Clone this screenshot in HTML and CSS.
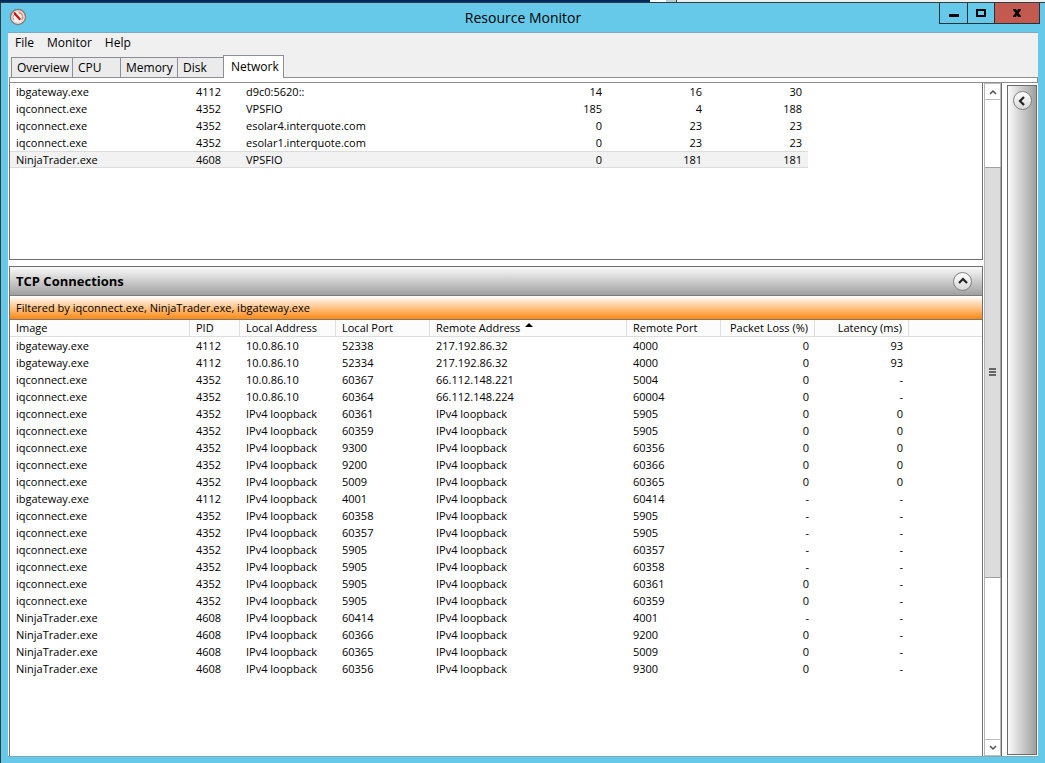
FILE: index.html
```html
<!DOCTYPE html>
<html lang="en">
<head>
    <meta charset="UTF-8">
    <meta name="viewport" content="width=device-width, initial-scale=1.0">
    <title>Resource Monitor</title>
    <link rel="stylesheet" href="styles.css">
</head>
<body>
    <div class="desktop">
        <div class="desktop-dark"></div>
        <div class="desktop-scroll"></div>
        <div class="desktop-light"></div>
    </div>
    <div class="window">
        <header class="titlebar">
            <svg class="app-icon" width="18" height="18" viewBox="0 0 18 18">
                <circle cx="9" cy="9" r="7.5" fill="#f7f4f2" stroke="#857a75" stroke-width="1.4"/>
                <circle cx="9" cy="9" r="6" fill="none" stroke="#ddd3ce" stroke-width="1"/>
                <path d="M9.500 4.500a4.500 4.500 0 0 1 3 7.500" fill="none" stroke="#e08a66" stroke-width="1.400"/>
                <path d="M5 12a5 5 0 0 1-.5-5" fill="none" stroke="#a8a09c" stroke-width="1"/>
                <path d="M4.500 4.500L6 4l6 7-1.500 1.500L5 6.500z" fill="#d3120f"/>
            </svg>
            <h1 class="title">Resource Monitor</h1>
            <div class="window-buttons">
                <button class="win-btn" aria-label="Minimize"><svg width="10" height="10" viewBox="0 0 10 10"><path d="M0 6h10v3H0z"/></svg></button>
                <button class="win-btn" aria-label="Maximize"><svg width="10" height="10" viewBox="0 0 10 10"><path d="M0 1h10v8H0zM2 3v4h6V3z" fill-rule="evenodd"/></svg></button>
                <button class="win-btn close" aria-label="Close"><svg width="10" height="10" viewBox="0 0 10 10"><path d="M1 1h3l1 2 1-2h3v1L6.500 5 9 8v1H6L5 7 4 9H1V8l2.500-3L1 2z"/></svg></button>
            </div>
        </header>
        <div class="content">
            <nav class="menu">
                <button>File</button>
                <button>Monitor</button>
                <button>Help</button>
            </nav>
            <div class="tabs" role="tablist">
                <button class="tab overview" role="tab">Overview</button>
                <button class="tab cpu" role="tab">CPU</button>
                <button class="tab memory" role="tab">Memory</button>
                <button class="tab disk" role="tab">Disk</button>
                <button class="tab network active" role="tab" aria-selected="true">Network</button>
            </div>
            <div class="tab-edge"></div>
            <main class="page">
                <div class="panels">
                    <section class="panel activity">
                        <table class="activity-table">
                            <colgroup>
                                <col class="w-image"><col class="w-pid"><col class="w-host"><col class="w-rate"><col class="w-rate"><col class="w-rate">
                            </colgroup>
                            <tbody>
                                <tr><td>ibgateway.exe</td><td>4112</td><td>d9c0:5620::</td><td class="num">14</td><td class="num">16</td><td class="num">30</td></tr>
                                <tr><td>iqconnect.exe</td><td>4352</td><td>VPSFIO</td><td class="num">185</td><td class="num">4</td><td class="num">188</td></tr>
                                <tr><td>iqconnect.exe</td><td>4352</td><td>esolar4.interquote.com</td><td class="num">0</td><td class="num">23</td><td class="num">23</td></tr>
                                <tr><td>iqconnect.exe</td><td>4352</td><td>esolar1.interquote.com</td><td class="num">0</td><td class="num">23</td><td class="num">23</td></tr>
                                <tr class="selected"><td>NinjaTrader.exe</td><td>4608</td><td>VPSFIO</td><td class="num">0</td><td class="num">181</td><td class="num">181</td></tr>
                            </tbody>
                        </table>
                    </section>
                    <section class="panel tcp">
                        <div class="panel-head">
                            <h2>TCP Connections</h2>
                            <button class="round-btn" aria-label="Collapse"><svg width="10" height="10" viewBox="0 0 10 10"><path d="M1 7l4-4 4 4" fill="none" stroke="#222" stroke-width="2.200"/></svg></button>
                        </div>
                        <div class="filter">Filtered by iqconnect.exe, NinjaTrader.exe, ibgateway.exe</div>
                        <table class="tcp-table">
                            <colgroup>
                                <col class="w-image"><col class="w-pid"><col class="w-address"><col class="w-port"><col class="w-remote"><col class="w-port"><col class="w-port"><col class="w-port"><col>
                            </colgroup>
                            <thead>
                                <tr><th>Image</th><th>PID</th><th>Local Address</th><th>Local Port</th><th class="sorted">Remote Address</th><th>Remote Port</th><th class="num">Packet Loss (%)</th><th class="num">Latency (ms)</th><th></th></tr>
                            </thead>
                            <tbody>
                                <tr><td>ibgateway.exe</td><td>4112</td><td>10.0.86.10</td><td>52338</td><td>217.192.86.32</td><td>4000</td><td class="num">0</td><td class="num">93</td><td></td></tr>
                                <tr><td>ibgateway.exe</td><td>4112</td><td>10.0.86.10</td><td>52334</td><td>217.192.86.32</td><td>4000</td><td class="num">0</td><td class="num">93</td><td></td></tr>
                                <tr><td>iqconnect.exe</td><td>4352</td><td>10.0.86.10</td><td>60367</td><td>66.112.148.221</td><td>5004</td><td class="num">0</td><td class="num">-</td><td></td></tr>
                                <tr><td>iqconnect.exe</td><td>4352</td><td>10.0.86.10</td><td>60364</td><td>66.112.148.224</td><td>60004</td><td class="num">0</td><td class="num">-</td><td></td></tr>
                                <tr><td>iqconnect.exe</td><td>4352</td><td>IPv4 loopback</td><td>60361</td><td>IPv4 loopback</td><td>5905</td><td class="num">0</td><td class="num">0</td><td></td></tr>
                                <tr><td>iqconnect.exe</td><td>4352</td><td>IPv4 loopback</td><td>60359</td><td>IPv4 loopback</td><td>5905</td><td class="num">0</td><td class="num">0</td><td></td></tr>
                                <tr><td>iqconnect.exe</td><td>4352</td><td>IPv4 loopback</td><td>9300</td><td>IPv4 loopback</td><td>60356</td><td class="num">0</td><td class="num">0</td><td></td></tr>
                                <tr><td>iqconnect.exe</td><td>4352</td><td>IPv4 loopback</td><td>9200</td><td>IPv4 loopback</td><td>60366</td><td class="num">0</td><td class="num">0</td><td></td></tr>
                                <tr><td>iqconnect.exe</td><td>4352</td><td>IPv4 loopback</td><td>5009</td><td>IPv4 loopback</td><td>60365</td><td class="num">0</td><td class="num">0</td><td></td></tr>
                                <tr><td>ibgateway.exe</td><td>4112</td><td>IPv4 loopback</td><td>4001</td><td>IPv4 loopback</td><td>60414</td><td class="num">-</td><td class="num">-</td><td></td></tr>
                                <tr><td>iqconnect.exe</td><td>4352</td><td>IPv4 loopback</td><td>60358</td><td>IPv4 loopback</td><td>5905</td><td class="num">-</td><td class="num">-</td><td></td></tr>
                                <tr><td>iqconnect.exe</td><td>4352</td><td>IPv4 loopback</td><td>60357</td><td>IPv4 loopback</td><td>5905</td><td class="num">-</td><td class="num">-</td><td></td></tr>
                                <tr><td>iqconnect.exe</td><td>4352</td><td>IPv4 loopback</td><td>5905</td><td>IPv4 loopback</td><td>60357</td><td class="num">-</td><td class="num">-</td><td></td></tr>
                                <tr><td>iqconnect.exe</td><td>4352</td><td>IPv4 loopback</td><td>5905</td><td>IPv4 loopback</td><td>60358</td><td class="num">-</td><td class="num">-</td><td></td></tr>
                                <tr><td>iqconnect.exe</td><td>4352</td><td>IPv4 loopback</td><td>5905</td><td>IPv4 loopback</td><td>60361</td><td class="num">0</td><td class="num">-</td><td></td></tr>
                                <tr><td>iqconnect.exe</td><td>4352</td><td>IPv4 loopback</td><td>5905</td><td>IPv4 loopback</td><td>60359</td><td class="num">0</td><td class="num">-</td><td></td></tr>
                                <tr><td>NinjaTrader.exe</td><td>4608</td><td>IPv4 loopback</td><td>60414</td><td>IPv4 loopback</td><td>4001</td><td class="num">-</td><td class="num">-</td><td></td></tr>
                                <tr><td>NinjaTrader.exe</td><td>4608</td><td>IPv4 loopback</td><td>60366</td><td>IPv4 loopback</td><td>9200</td><td class="num">0</td><td class="num">-</td><td></td></tr>
                                <tr><td>NinjaTrader.exe</td><td>4608</td><td>IPv4 loopback</td><td>60365</td><td>IPv4 loopback</td><td>5009</td><td class="num">0</td><td class="num">-</td><td></td></tr>
                                <tr><td>NinjaTrader.exe</td><td>4608</td><td>IPv4 loopback</td><td>60356</td><td>IPv4 loopback</td><td>9300</td><td class="num">0</td><td class="num">-</td><td></td></tr>
                            </tbody>
                        </table>
                    </section>
                </div>
                <div class="scrollbar">
                    <button class="scroll-btn up" aria-label="Scroll up"><svg width="8" height="6" viewBox="0 0 8 6"><path d="M1 5l3-3 3 3" fill="none" stroke="#505050" stroke-width="1.500"/></svg></button>
                    <div class="track-above"></div>
                    <div class="thumb"><svg width="7" height="8" viewBox="0 0 7 8"><path d="M0 0h7v2H0zM0 3h7v2H0zM0 6h7v2H0z" fill="#666"/></svg></div>
                    <div class="track-below"></div>
                    <button class="scroll-btn down" aria-label="Scroll down"><svg width="8" height="6" viewBox="0 0 8 6"><path d="M1 1l3 3 3-3" fill="none" stroke="#505050" stroke-width="1.500"/></svg></button>
                </div>
                <aside class="side">
                    <button class="round-btn" aria-label="Show graphs"><svg width="10" height="10" viewBox="0 0 10 10"><path d="M7 1L3 5l4 4" fill="none" stroke="#222" stroke-width="2.200"/></svg></button>
                </aside>
            </main>
        </div>
    </div>
</body>
</html>
```
FILE: styles.css
```css
* {
    box-sizing: border-box;
}
body {
    margin: 0;
    height: 100vh;
    display: flex;
    flex-direction: column;
    overflow: hidden;
    font-family: "Open Sans", "Noto Sans", sans-serif;
    font-size: 11px;
    color: #000;
}
button {
    font: inherit;
    color: inherit;
    margin: 0;
    padding: 0;
    border: 0;
    background: none;
}
svg {
    display: block;
}
/* strip of the windows behind */
.desktop {
    display: flex;
    height: 2px;
}
.desktop-dark {
    flex: 651;
    background: #04265a;
}
.desktop-scroll {
    flex: 26;
    background: linear-gradient(to right, #fff 60%, #b9cdd2 60%);
    border-right: 1px solid #444;
}
.desktop-light {
    flex: 368;
    background: #eee;
}
.window {
    flex: 1;
    min-height: 0;
    display: flex;
    flex-direction: column;
    background: #66c9e9;
    border-top: 1px solid #2e3c44;
    border-left: 1px solid #2e3c44;
    padding: 0 7px 6px;
}
.titlebar {
    display: grid;
    grid-template-columns: 1fr auto 1fr;
    align-items: start;
    height: 29px;
}
.app-icon {
    margin: 5px 0 0 1px;
}
.title {
    margin: 0;
    font-size: 14px;
    font-weight: 400;
    line-height: 29px;
}
.window-buttons {
    display: flex;
    justify-self: end;
    margin-right: -2px;
    border: 1px solid #24323a;
    border-top: 0;
}
.win-btn {
    display: flex;
    align-items: center;
    justify-content: center;
    width: 27px;
    height: 20px;
    border-left: 1px solid #24323a;
}
.win-btn:first-child {
    border-left: 0;
}
.win-btn.close {
    width: 45px;
    background: #c25a50;
}
.content {
    flex: 1;
    min-height: 0;
    display: flex;
    flex-direction: column;
    background: #f0f0f0;
    border-top: 1px solid #7fa9bb;
    border-bottom: 1px solid #7fa9bb;
}
.menu {
    display: flex;
    align-items: flex-start;
    gap: 13px;
    height: 22px;
    padding: 0 7px;
    font-size: 12px;
    line-height: 19px;
}
.tabs {
    display: flex;
    align-items: flex-end;
    height: 22px;
    padding-left: 3px;
    font-size: 12px;
}
.tab {
    height: 20px;
    padding: 0 5px;
    text-align: left;
    border: 1px solid #8c8e97;
    border-width: 1px 0 0 1px;
    background: #ebebeb;
}
.overview {
    width: 61px;
}
.cpu {
    width: 48px;
}
.memory {
    width: 57px;
}
.disk {
    width: 46px;
}
.network {
    width: 61px;
}
.tab.active {
    height: 23px;
    margin-bottom: -1px;
    padding: 0 7px 2px;
    background: #fff;
    border-right-width: 1px;
    z-index: 1;
}
.tab-edge {
    height: 6px;
    margin-left: 1px;
    background: #fff;
    border: 1px solid #8c8e97;
}
.page {
    flex: 1;
    min-height: 0;
    display: flex;
    background: #fff;
    padding-left: 1px;
}
.panels {
    flex: 1;
    min-width: 0;
    display: flex;
    flex-direction: column;
    gap: 6px;
}
.panel {
    border: 1px solid #6e6e6e;
}
.activity {
    height: 177px;
    border-top: 0;
}
.tcp {
    flex: 1;
    border-bottom: 0;
}
.panel-head {
    display: flex;
    align-items: center;
    justify-content: space-between;
    height: 29px;
    padding: 0 10px 0 6px;
    background: linear-gradient(#fafafa, #a0a0a0);
    border-bottom: 1px solid #7c7c7c;
}
.panel-head h2 {
    margin: 0;
    font-size: 13px;
    font-weight: 700;
}
.round-btn {
    display: flex;
    align-items: center;
    justify-content: center;
    width: 19px;
    height: 19px;
    border: 1px solid #808080;
    border-radius: 50%;
    background: linear-gradient(#fff, #d8d8d8);
}
.filter {
    height: 24px;
    padding-left: 6px;
    line-height: 24px;
    background: linear-gradient(#fff, #ff8a14);
    border-bottom: 1px solid #80766c;
}
table {
    table-layout: fixed;
    border-collapse: separate;
    border-spacing: 0;
    line-height: 17px;
}
.activity-table {
    width: 798px;
}
.tcp-table {
    width: 100%;
}
.w-image {
    width: 180px;
}
.w-pid {
    width: 50px;
}
.w-host {
    width: 268px;
}
.w-rate {
    width: 100px;
}
.w-address {
    width: 96px;
}
.w-port {
    width: 94px;
}
.w-remote {
    width: 197px;
}
th, td {
    height: 17px;
    padding: 0 6px;
    text-align: left;
    font-weight: 400;
    white-space: nowrap;
}
th {
    line-height: 16px;
    background: #fcfcfc;
    border-right: 1px solid #dedede;
    border-bottom: 1px solid #dedede;
}
th:last-child {
    border-right: 0;
}
.num {
    text-align: right;
}
/* sort arrow next to the heading */
.sorted::after {
    content: "";
    display: inline-block;
    margin-left: 5px;
    border: 4px solid transparent;
    border-top: 0;
    border-bottom-color: #000;
    vertical-align: 5px;
}
.selected td {
    background: #f2f2f2;
    border-top: 1px solid #dcdcdc;
    border-bottom: 1px solid #dcdcdc;
    line-height: 15px;
}
.scrollbar {
    display: flex;
    flex-direction: column;
    width: 18px;
    margin-left: 1px;
    border-left: 1px solid #b5b5b5;
    border-right: 1px solid #6a6a6a;
}
.scroll-btn {
    display: flex;
    align-items: center;
    justify-content: center;
    height: 17px;
    border: 1px solid #bdbdbd;
    border-left: 0;
}
.track-above {
    flex: 67;
    border-right: 1px solid #bdbdbd;
}
.thumb {
    flex: 410;
    display: flex;
    align-items: center;
    justify-content: center;
    background: #dcdcdc;
    border: 1px solid #a0a0a0;
    border-left: 0;
}
.track-below {
    flex: 162;
    border-right: 1px solid #bdbdbd;
}
.side {
    display: flex;
    justify-content: center;
    align-items: flex-start;
    width: 30px;
    margin: 2px 1px 1px 5px;
    padding-top: 5px;
    border: 1px solid #6a6a6a;
    background: linear-gradient(to right, #fafafa, #a0a0a0);
}
```
